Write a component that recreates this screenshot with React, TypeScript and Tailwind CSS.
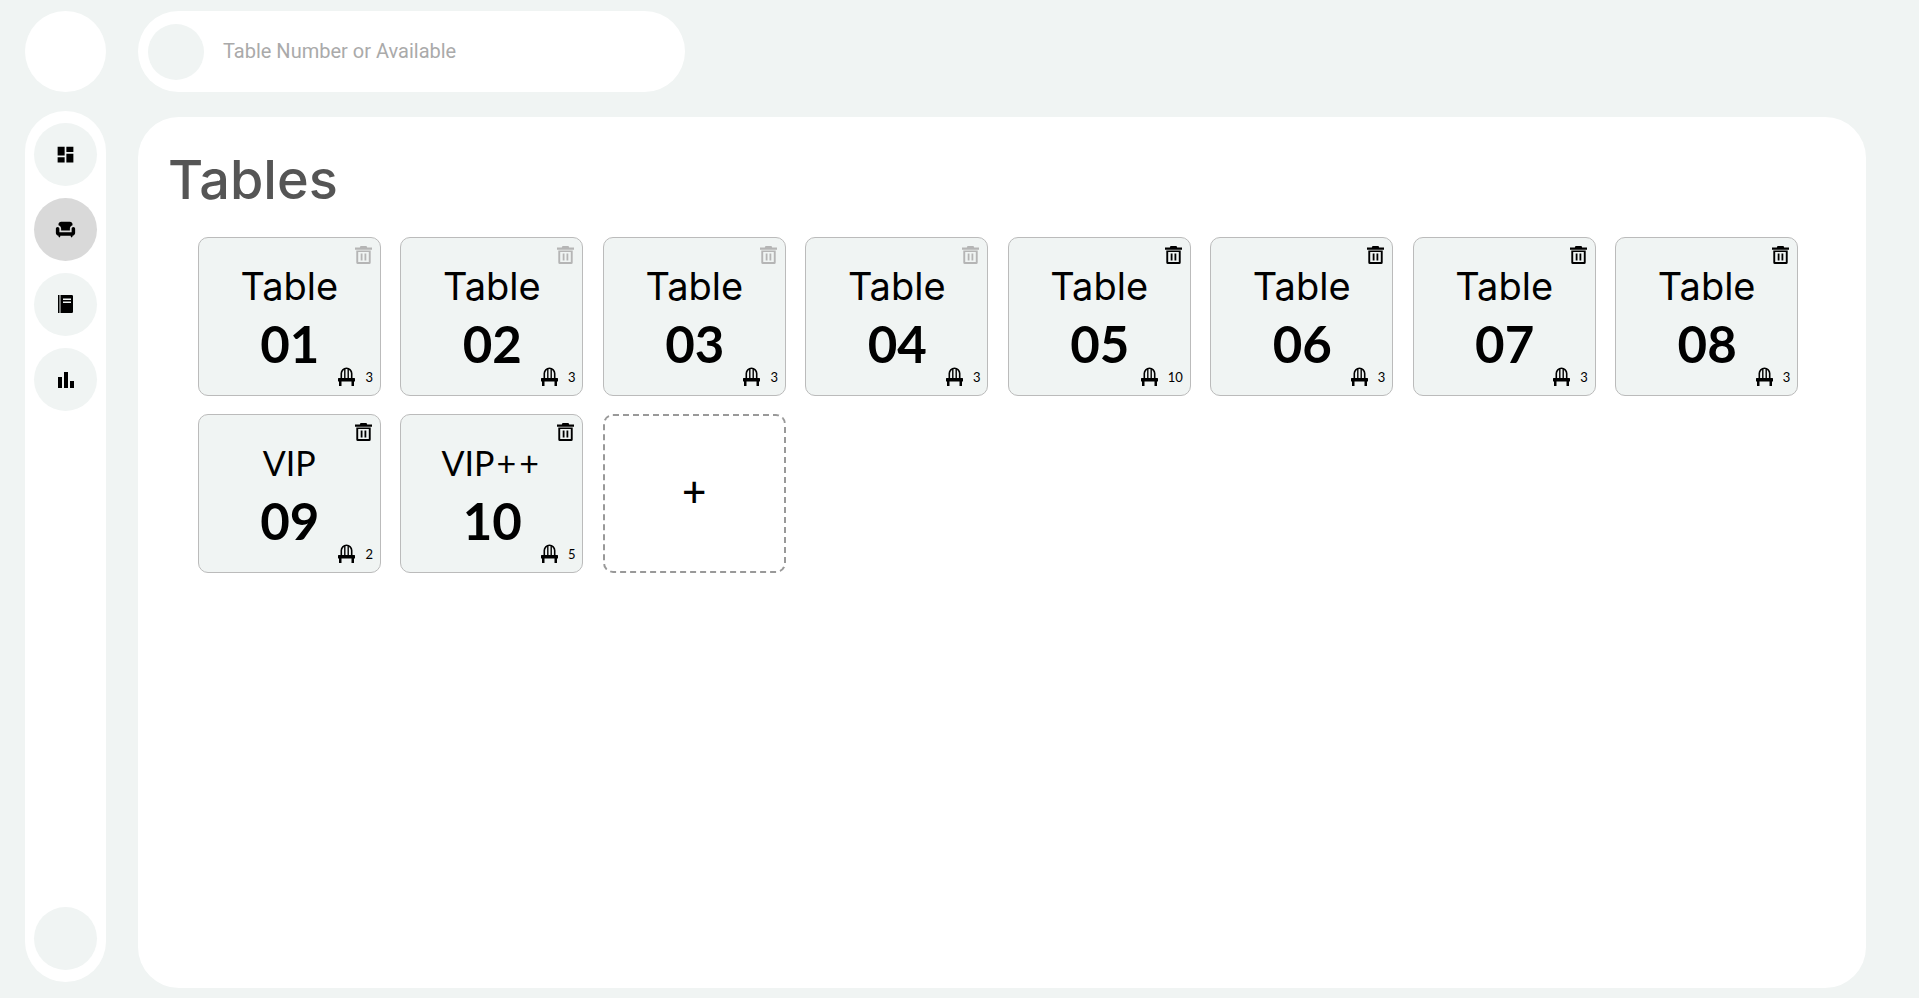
import { MdDashboard, MdChair, MdBarChart } from "react-icons/md";

const Trash = ({ className }: { className: string }) => (
  <svg viewBox="0 0 17 18" className={className} fill="currentColor">
    <path d="M5.500 0h6l.7 1.500H17v2.200H0V1.500h4.800z" />
    <path fillRule="evenodd" d="M1.300 4.500h14.400V16.500a1.500 1.500 0 0 1-1.500 1.500H2.800a1.500 1.500 0 0 1-1.500-1.500zM3.200 6v10h10.600V6z" />
    <rect x="5.700" y="7.500" width="1.800" height="7" />
    <rect x="9.500" y="7.500" width="1.800" height="7" />
  </svg>
);

const Chair = () => (
  <svg viewBox="0 0 17 19" className="w-[17px] h-[19px]" fill="currentColor">
    <path d="M3.300 11.500V6.500a5.200 5.200 0 0 1 10.400 0v5" fill="none" stroke="currentColor" strokeWidth="1.600" />
    <rect x="6.100" y="1.300" width="1.400" height="10" />
    <rect x="9.500" y="1.300" width="1.400" height="10" />
    <rect x="0" y="11" width="17" height="3.500" rx="0.500" />
    <rect x="1" y="14" width="2.500" height="5" />
    <rect x="13.500" y="14" width="2.500" height="5" />
  </svg>
);

const Notebook = () => (
  <svg viewBox="0 0 15 18" className="w-[15px] h-[18px] mb-[2px]" fill="currentColor">
    <rect x="0" y="0" width="1.500" height="18" />
    <path fillRule="evenodd" d="M2.500 0h11.300a1.200 1.200 0 0 1 1.200 1.200v15.600a1.200 1.200 0 0 1-1.200 1.200H2.500zM5 3.500V5h8V3.500zM5 6.500V8h8V6.500z" />
  </svg>
);

const nav = [
  { icon: <MdDashboard className="w-[21px] h-[21px]" />, active: false },
  { icon: <MdChair className="w-[21px] h-[21px]" />, active: true },
  { icon: <Notebook />, active: false },
  { icon: <MdBarChart className="w-6 h-6" />, active: false },
];

const tables = [
  { label: "Table", no: "01", seats: "3", busy: true },
  { label: "Table", no: "02", seats: "3", busy: true },
  { label: "Table", no: "03", seats: "3", busy: true },
  { label: "Table", no: "04", seats: "3", busy: true },
  { label: "Table", no: "05", seats: "10", busy: false },
  { label: "Table", no: "06", seats: "3", busy: false },
  { label: "Table", no: "07", seats: "3", busy: false },
  { label: "Table", no: "08", seats: "3", busy: false },
  { label: "VIP", no: "09", seats: "2", busy: false },
  { label: "VIP++", no: "10", seats: "5", busy: false },
];

const Label = ({ text }: { text: string }) => {
  if (text === "Table") {
    return <div className="mt-[26px] h-[44px] text-[38px] leading-[44px] font-normal font-['Inter',sans-serif]">Table</div>;
  }
  return (
    <div className="mt-[26px] h-[44px] text-[34px] leading-[44px] font-normal font-['Lato',sans-serif]">
      VIP
      {text === "VIP++" ? <span className="tracking-[3px] ml-[2px]">++</span> : null}
    </div>
  );
};

export default function App() {
  return (
    <div className="w-[1919px] h-[998px] overflow-hidden bg-[#f0f4f3] flex gap-[32px] pl-[25px] pt-[11px] font-['Inter',sans-serif]">
      <aside className="w-[81px] flex flex-col gap-[19px] h-[971px] shrink-0">
        <div className="h-[81px] rounded-full bg-white shrink-0" />
        <nav className="h-[871px] rounded-[41px] bg-white flex flex-col items-center pt-[12px] pb-[12px] gap-[12px]">
          {nav.map((n, i) => (
            <div
              key={i}
              className={`w-[63px] h-[63px] rounded-full flex items-center justify-center text-black ${n.active ? "bg-[#d9d9d9]" : "bg-[#f0f4f3]"}`}
            >
              {n.icon}
            </div>
          ))}
          <div className="w-[63px] h-[63px] rounded-full bg-[#f0f4f3] mt-auto" />
        </nav>
      </aside>
      <main className="w-[1728px] flex flex-col gap-[25px]">
        <div className="w-[547px] h-[81px] rounded-full bg-white flex items-center pl-[10px] gap-[19px] shrink-0">
          <div className="w-[56px] h-[56px] rounded-full bg-[#f0f4f3]" />
          <span className="pb-[2px] text-[#aaaaaa] text-[20px] font-['Roboto',sans-serif]">Table Number or Available</span>
        </div>
        <section className="h-[871px] rounded-[41px] bg-white pl-[30px] pt-[31px]">
          <h1 className="text-[54px] leading-[63px] font-medium text-[#555555]">Tables</h1>
          <div className="mt-[26px] ml-[29.600px] flex flex-wrap gap-x-[19.100px] gap-y-[18px] w-[1640px]">
            {tables.map((t) => (
              <div key={t.no} className="relative w-[183.400px] h-[159px] rounded-[10px] border border-[#bbbbbb] bg-[#f0f4f3] flex flex-col items-center text-black font-['Lato',sans-serif]">
                <Trash className={`absolute top-[8px] right-[8px] w-[17px] h-[18px] ${t.busy ? "text-[#b5b5b5]" : "text-black"}`} />
                <Label text={t.label} />
                <div className="mt-[5px] pl-[1px] text-[51px] leading-[62px] font-bold">{t.no}</div>
                <div className="absolute right-[7px] bottom-[9px] flex items-center gap-[10px]">
                  <Chair />
                  <span className="text-[13px] leading-[16px] font-normal">{t.seats}</span>
                </div>
              </div>
            ))}
            <div className="w-[183.400px] h-[159px] pb-[4px] rounded-[10px] border-2 border-dashed border-[#999999] bg-white flex items-center justify-center text-black text-[42px] font-medium font-['Lato',sans-serif]">
              +
            </div>
          </div>
        </section>
      </main>
    </div>
  );
}
